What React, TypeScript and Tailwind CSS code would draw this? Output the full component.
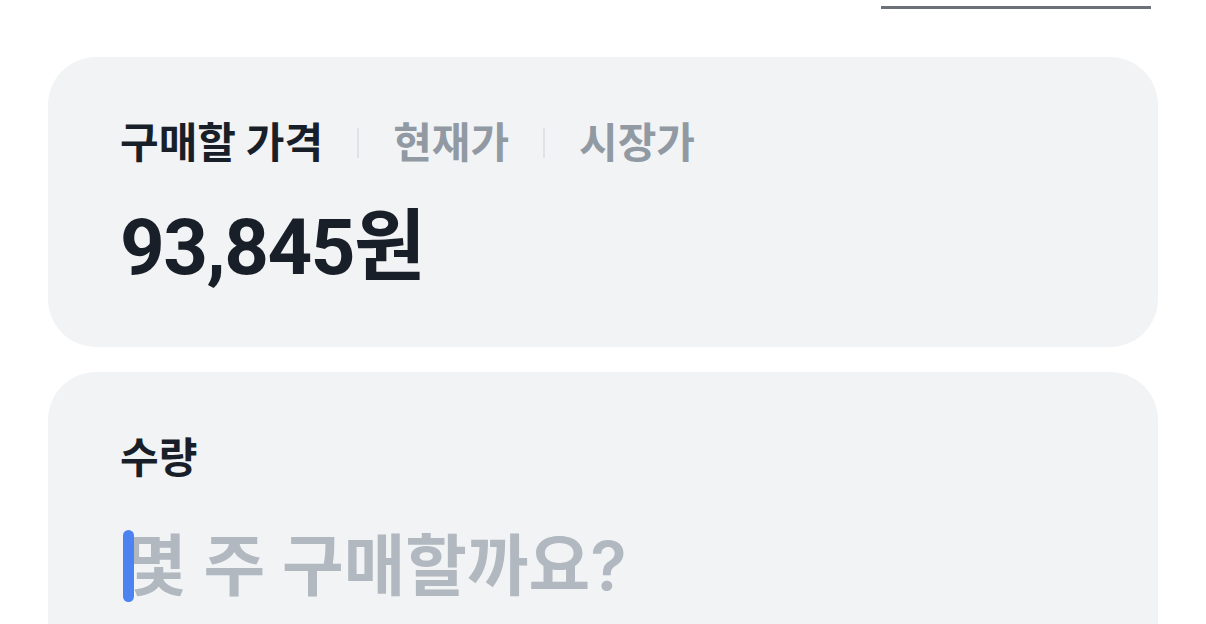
export default function App() {
  return (
    <main
      className="h-[624px] overflow-hidden bg-white"
      style={{ fontFamily: '"Inter", "Noto Sans CJK KR", sans-serif' }}
    >
      <div className="flex h-[57px] justify-end pr-[55px] pt-[6px]">
        <div className="h-[3px] w-[270px] bg-[#6b7079]" />
      </div>

      <div className="mx-[48px] flex flex-col gap-[25px]">
        <section className="h-[290px] rounded-[48px] bg-[#f2f3f5] px-[72px] pt-[62px]">
          <div className="flex h-[48px] items-center text-[42px] font-bold leading-[48px]">
            <span className="text-[#191f28]">구매할 가격</span>
            <span className="mx-[34px] h-[30px] w-[2px] bg-[#dfe2e6]" />
            <span className="font-semibold text-[#9199a3]">현재가</span>
            <span className="mx-[34px] h-[30px] w-[2px] bg-[#dfe2e6]" />
            <span className="font-semibold text-[#9199a3]">시장가</span>
          </div>
          <div className="mt-[36px] font-['Roboto','Noto_Sans_CJK_KR',sans-serif] text-[78px] font-bold leading-[90px] tracking-[-1.5px] text-[#191f28]">
            93,845원
          </div>
        </section>

        <section className="h-[300px] rounded-[48px] bg-[#f2f3f5] px-[72px] pt-[62px]">
          <div className="text-[42px] font-bold leading-[48px] text-[#191f28]">
            수량
          </div>
          <div className="mt-[44px] flex h-[80px] items-center">
            <span className="relative z-10 ml-[3px] h-[72px] w-[11px] rounded-full bg-[#4d83f1]" />
            <span className="-ml-[9px] text-[67px] font-semibold leading-[80px] text-[#b1b8c0]">
              몇 주 구매할까요?
            </span>
          </div>
        </section>
      </div>
    </main>
  );
}
